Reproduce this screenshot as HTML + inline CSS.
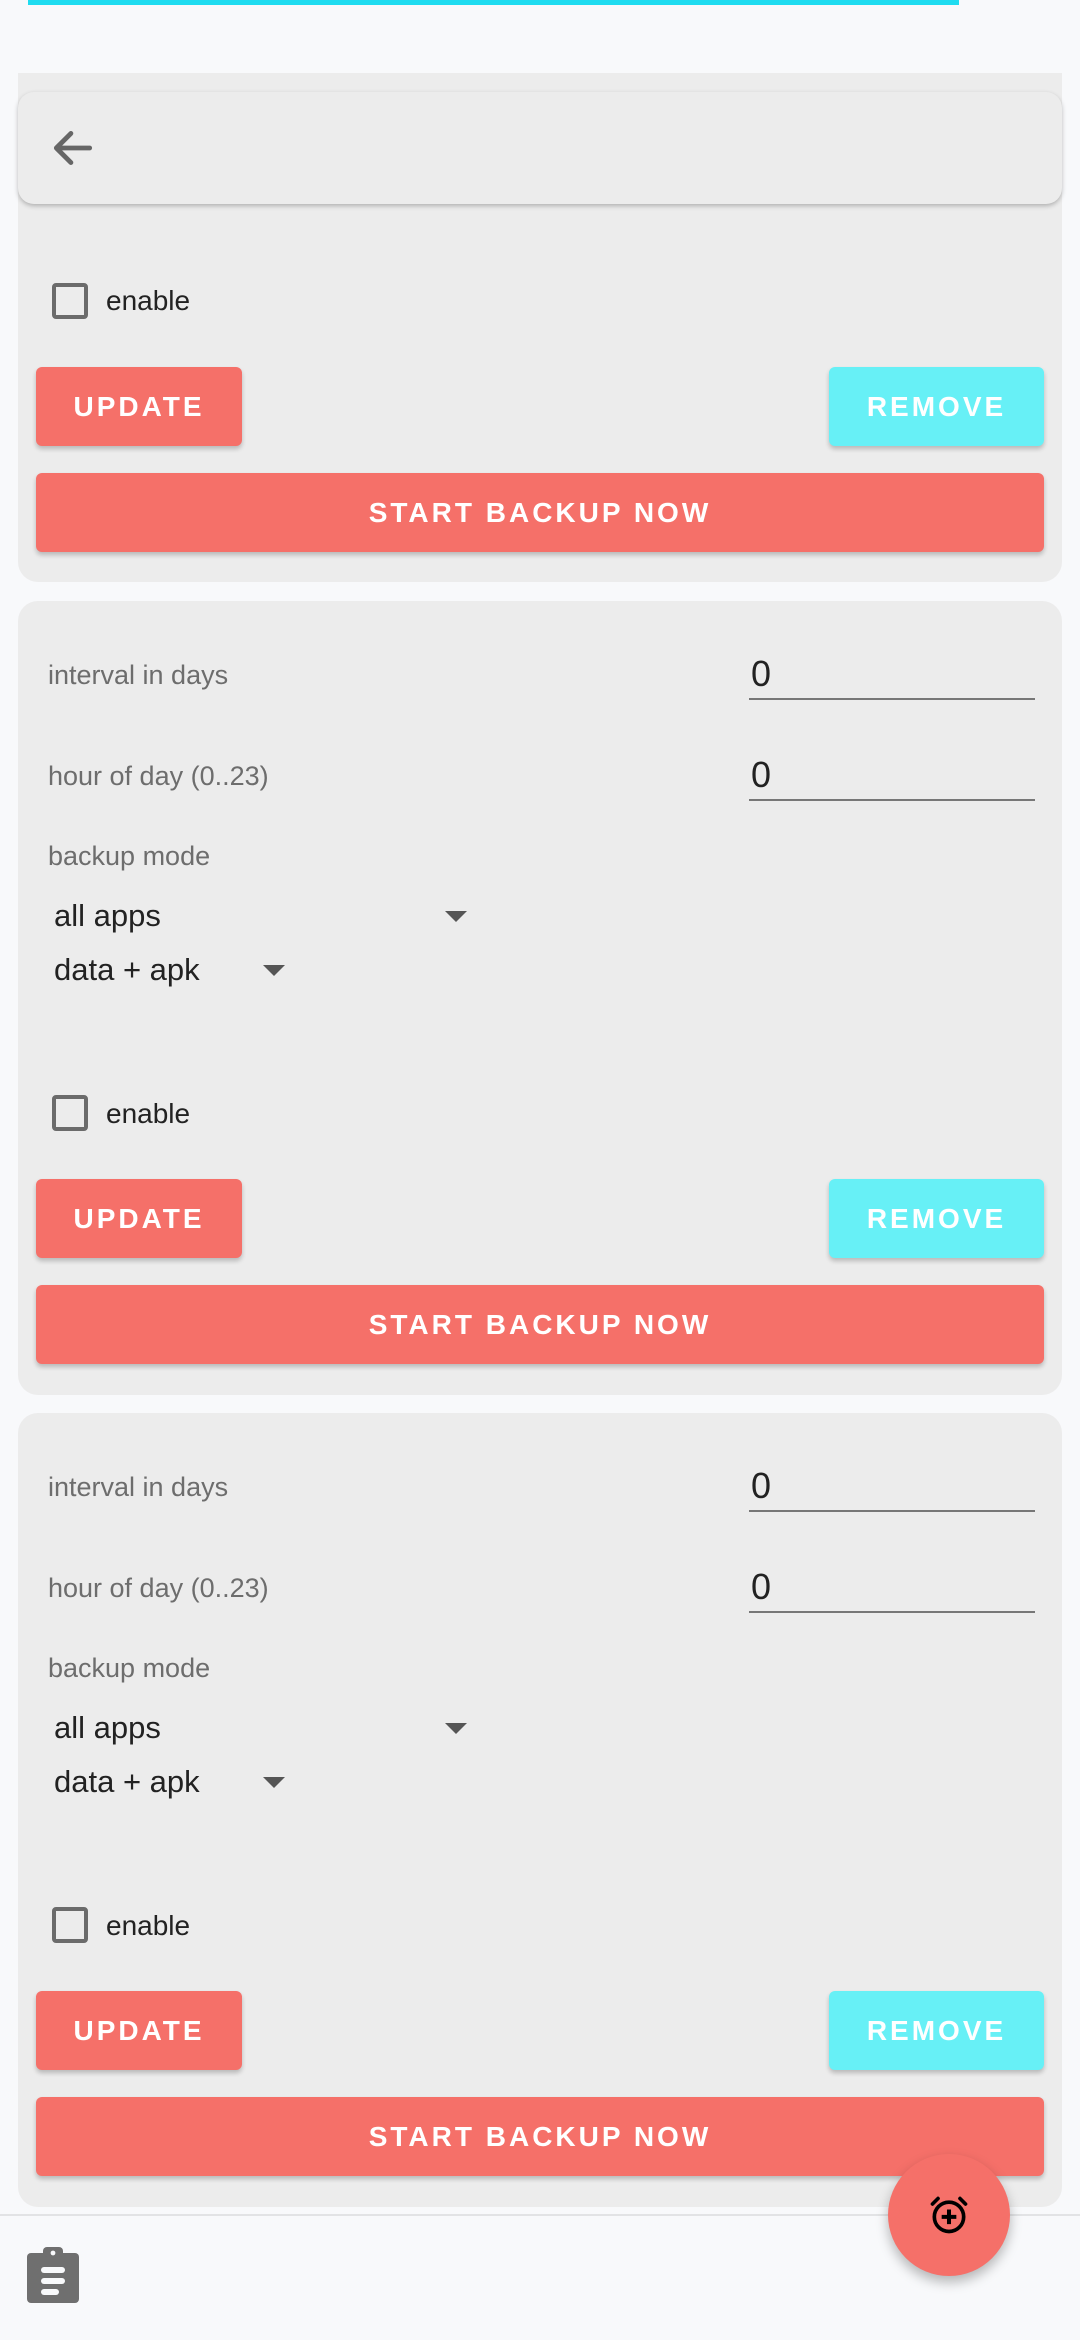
<!DOCTYPE html>
<html><head><meta charset="utf-8"><style>
*{margin:0;padding:0;box-sizing:border-box}
body{width:1080px;height:2340px;background:#f8f9fb;position:relative;overflow:hidden;font-family:"Liberation Sans",sans-serif}
.a{position:absolute}
.card{position:absolute;left:18px;width:1044px;background:#ececec;border-radius:20px}
.lbl{position:absolute;left:30px;font-size:27px;color:#6d6d6d}
.inp{position:absolute;left:731px;width:286px;border-bottom:2px solid #777;font-size:36px;color:#222;padding-left:2px;height:46px;line-height:40px}
.sel{position:absolute;left:36px;font-size:31px;color:#222}
.tri{position:absolute;width:0;height:0;border-left:11px solid transparent;border-right:11px solid transparent;border-top:11px solid #555}
.cb{position:absolute;left:34px;width:36px;height:36px;border:4px solid #6b6b6b;border-radius:4px}
.en{position:absolute;left:88px;font-size:28px;color:#222}
.btn{position:absolute;height:79px;border-radius:6px;color:#fff;font-weight:bold;font-size:28px;letter-spacing:3px;display:flex;align-items:center;justify-content:center;box-shadow:0 3px 5px rgba(0,0,0,.22)}
.up{left:18px;width:206px;background:#f57069}
.rm{left:811px;width:215px;background:#67f0f6}
.st{left:18px;width:1008px;background:#f57069}
</style></head><body>
<div class="a" style="left:28px;top:0;width:931px;height:5px;background:#1fdcf0"></div>

<div class="card" style="top:73px;height:509px;border-top-left-radius:0;border-top-right-radius:0">
  <div class="cb" style="top:210px"></div><div class="en" style="top:212px">enable</div>
  <div class="btn up" style="top:294px">UPDATE</div>
  <div class="btn rm" style="top:294px">REMOVE</div>
  <div class="btn st" style="top:400px">START BACKUP NOW</div>
</div>
<div class="a" style="left:18px;top:92px;width:1044px;height:112px;background:#ececec;border-radius:16px;box-shadow:0 2px 5px rgba(0,0,0,.25)">
  <svg class="a" style="left:30px;top:31px" width="50" height="50" viewBox="0 0 24 24"><path d="M20 12H5M11 5l-7 7 7 7" fill="none" stroke="#666" stroke-width="2.3" stroke-linecap="round" stroke-linejoin="round"/></svg>
</div>

<div class="card" style="top:601px;height:794px">
  <div class="lbl" style="top:59px">interval in days</div>
  <div class="inp" style="top:53px">0</div>
  <div class="lbl" style="top:160px">hour of day (0..23)</div>
  <div class="inp" style="top:154px">0</div>
  <div class="lbl" style="top:240px">backup mode</div>
  <div class="sel" style="top:297px">all apps</div><div class="tri" style="left:427px;top:310px"></div>
  <div class="sel" style="top:351px">data + apk</div><div class="tri" style="left:245px;top:364px"></div>
  <div class="cb" style="top:494px"></div><div class="en" style="top:497px">enable</div>
  <div class="btn up" style="top:578px">UPDATE</div>
  <div class="btn rm" style="top:578px">REMOVE</div>
  <div class="btn st" style="top:684px">START BACKUP NOW</div>
</div>

<div class="card" style="top:1413px;height:794px">
  <div class="lbl" style="top:59px">interval in days</div>
  <div class="inp" style="top:53px">0</div>
  <div class="lbl" style="top:160px">hour of day (0..23)</div>
  <div class="inp" style="top:154px">0</div>
  <div class="lbl" style="top:240px">backup mode</div>
  <div class="sel" style="top:297px">all apps</div><div class="tri" style="left:427px;top:310px"></div>
  <div class="sel" style="top:351px">data + apk</div><div class="tri" style="left:245px;top:364px"></div>
  <div class="cb" style="top:494px"></div><div class="en" style="top:497px">enable</div>
  <div class="btn up" style="top:578px">UPDATE</div>
  <div class="btn rm" style="top:578px">REMOVE</div>
  <div class="btn st" style="top:684px">START BACKUP NOW</div>
</div>

<div class="a" style="left:0;top:2214px;width:1080px;height:126px;background:#f8f9fb;border-top:2px solid #e2e3e5"></div>
<svg class="a" style="left:27px;top:2247px" width="52" height="56" viewBox="0 0 26 28"><rect x="0" y="3" width="26" height="25" rx="2" fill="#6f6f6f"/><rect x="8" y="0" width="10" height="5" rx="2" fill="#6f6f6f"/><circle cx="13" cy="3" r="1.2" fill="#f8f9fb"/><rect x="7" y="10" width="12" height="3" rx="1.5" fill="#f8f9fb"/><rect x="7" y="15.5" width="12" height="3" rx="1.5" fill="#f8f9fb"/><rect x="7" y="21" width="9" height="3" rx="1.5" fill="#f8f9fb"/></svg>

<div class="a" style="left:888px;top:2154px;width:122px;height:122px;border-radius:50%;background:#f57069;box-shadow:0 6px 12px rgba(0,0,0,.28)">
  <svg class="a" style="left:39px;top:38px" width="44" height="46" viewBox="0 0 24 24"><circle cx="12" cy="13" r="8" fill="none" stroke="#000" stroke-width="2"/><path d="M12 9v8M8 13h8" stroke="#000" stroke-width="2.2"/><path d="M3 6l3-3M21 6l-3-3" stroke="#000" stroke-width="2" stroke-linecap="round"/></svg>
</div>
</body></html>
